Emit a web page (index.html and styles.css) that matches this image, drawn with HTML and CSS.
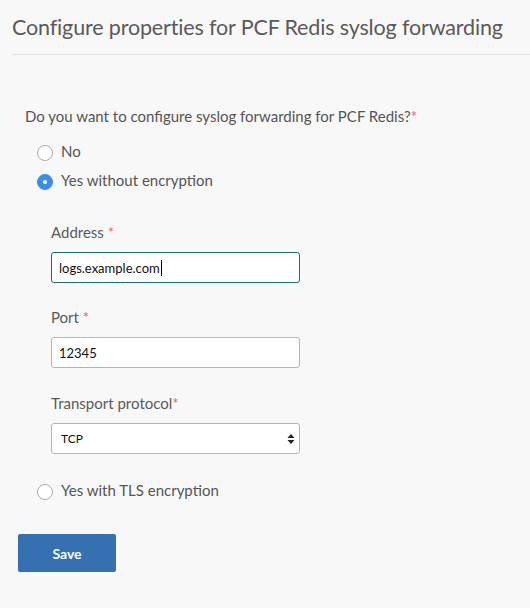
FILE: index.html
```html
<!DOCTYPE html>
<html>
<head>
<meta charset="utf-8">
<link rel="stylesheet" href="styles.css">
</head>
<body>
<div class="header">
  <h1 class="title">Configure properties for PCF Redis syslog forwarding</h1>
</div>
<form class="form">
  <div class="question">Do you want to configure syslog forwarding for PCF Redis?<span class="req">*</span></div>
  <div class="options">
    <div class="option"><span class="radio"></span><span class="opt-label">No</span></div>
    <div class="option"><span class="radio checked"></span><span class="opt-label">Yes without encryption</span></div>
  </div>
  <div class="fields">
    <div class="field">
      <div class="label">Address <span class="req">*</span></div>
      <div class="input focused"><span class="value">logs.example.com</span><span class="caret"></span></div>
    </div>
    <div class="field">
      <div class="label">Port <span class="req">*</span></div>
      <div class="input"><span class="value">12345</span></div>
    </div>
    <div class="field">
      <div class="label">Transport protocol<span class="req">*</span></div>
      <div class="input select"><span class="value sel">TCP</span>
        <svg class="arrows" width="8" height="12" viewBox="0 0 8 12"><path d="M4 1 L7.5 5 H0.5 Z M4 11 L7.5 7 H0.5 Z" fill="#222"/></svg>
      </div>
    </div>
  </div>
  <div class="option last"><span class="radio"></span><span class="opt-label">Yes with TLS encryption</span></div>
  <div class="actions"><button type="button" class="save">Save</button></div>
</form>
</body>
</html>
```
FILE: styles.css
```css
html, body {
  margin: 0;
  padding: 0;
  background: #f8f8f8;
  font-family: "Lato", "Open Sans", sans-serif;
  color: #555;
}
.header {
  margin-left: 12px;
  padding: 11px 0 11px;
  border-bottom: 1px solid #e2e2e2;
}
.title {
  margin: 0;
  font-size: 21.5px;
  letter-spacing: -0.15px;
  white-space: nowrap;
  font-weight: 400;
  line-height: 32px;
  color: #5a5a5a;
}
.form {
  padding: 0 0 0 25px;
  margin: 0;
}
.question {
  margin-top: 51px;
  font-size: 15px;
  line-height: 20px;
  color: #555;
}
.req {
  color: #e8655f;
}
.options {
  margin-top: 10px;
}
.option {
  display: flex;
  align-items: center;
  height: 29px;
  margin-left: 12px;
}
.radio {
  width: 14px;
  height: 14px;
  border: 1px solid #aaa;
  border-radius: 50%;
  background: #fff;
  box-sizing: content-box;
  margin-right: 8px;
  position: relative;
  top: 2px;
  flex: none;
}
.radio.checked {
  background: #3b8ee8;
  border-color: #3b8ee8;
}
.radio.checked::after {
  content: "";
  position: absolute;
  left: 5px;
  top: 5px;
  width: 4px;
  height: 4px;
  border-radius: 50%;
  background: #fff;
}
.opt-label {
  font-size: 15px;
  color: #555;
}
.fields {
  margin-left: 26px;
  padding-top: 28px;
}
.field {
  margin-bottom: 24px;
}
.field:nth-child(2) {
  margin-bottom: 25px;
}
.label {
  font-size: 15px;
  line-height: 20px;
  color: #5a5a5a;
  margin-bottom: 10px;
}
.input {
  width: 249px;
  height: 31px;
  box-sizing: border-box;
  background: #fff;
  border: 1px solid #b5b5b5;
  border-radius: 3px;
  display: flex;
  align-items: center;
  padding-left: 7px;
  font-size: 13px;
  color: #111;
}
.input.focused {
  border-color: #1b6e66;
}
.caret {
  width: 1px;
  height: 16px;
  background: #000;
  margin-left: 1px;
}
.select {
  justify-content: space-between;
  padding-left: 9px;
  padding-right: 4px;
}
.sel {
  font-size: 12px;
}
.option.last {
  margin-top: -3px;
}
.actions {
  margin-top: 30px;
  margin-left: -7px;
}
.save {
  width: 98px;
  height: 38px;
  background: #3570b0;
  color: #fff;
  border: none;
  border-radius: 2px;
  font-family: "Lato", sans-serif;
  font-weight: 700;
  font-size: 14px;
}
```
